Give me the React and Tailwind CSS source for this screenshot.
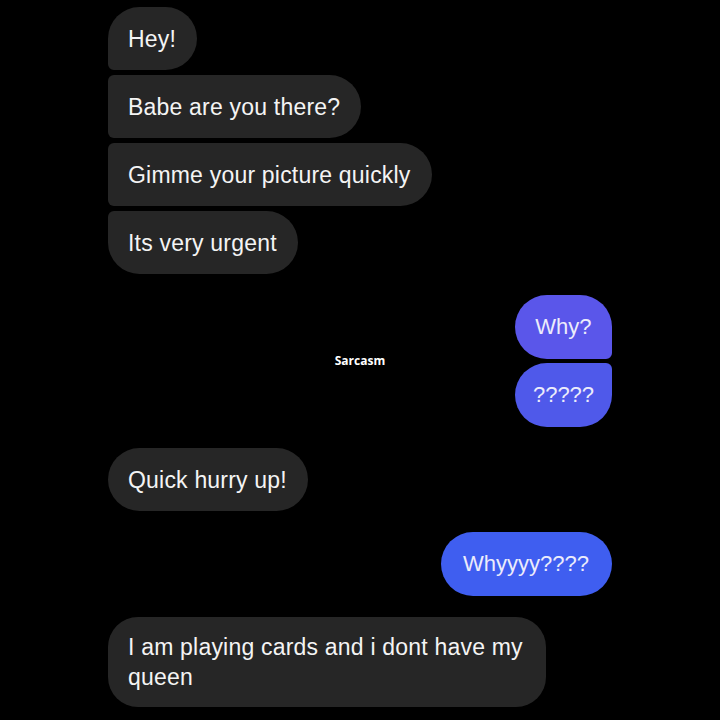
const gray = 'bg-[#262626] text-[#f4f4f4] text-[23px] leading-[30px] tracking-[0.2px] pl-5 pr-[21px]';
const blueText = 'text-[#ececfb] text-[22px] leading-[30px]';

const Left = ({ children, corners }) => (
  <div className={`${gray} ${corners} py-[16.5px] max-w-[438px]`}>{children}</div>
);

const App = () => {
  return (
    <div
      className="w-[720px] h-[720px] bg-black overflow-hidden flex flex-col gap-[21px] px-[108px] pt-[7px]"
      style={{ fontFamily: '"Liberation Sans", Arial, sans-serif' }}
    >
      {/* Incoming burst */}
      <div className="flex flex-col items-start gap-[5px]">
        <Left corners="rounded-[32px] rounded-bl-[6px]">Hey!</Left>
        <Left corners="rounded-r-[32px] rounded-l-[6px]">Babe are you there?</Left>
        <Left corners="rounded-r-[32px] rounded-l-[6px]">Gimme your picture quickly</Left>
        <Left corners="rounded-[32px] rounded-tl-[6px]">Its very urgent</Left>
      </div>

      {/* Outgoing pair + watermark */}
      <div className="grid grid-cols-[1fr_auto_1fr] items-center">
        <div />
        <div
          className="text-white text-[12px] font-bold"
          style={{ fontFamily: '"Open Sans", sans-serif' }}
        >
          Sarcasm
        </div>
        <div className="flex flex-col items-end gap-[4px]">
          <div className={`${blueText} bg-[#5a56ea] px-[20.5px] py-[17px] rounded-[32px] rounded-br-[6px]`}>
            Why?
          </div>
          <div className={`${blueText} bg-[#4f59ea] w-[97px] text-center py-[17px] rounded-[32px] rounded-tr-[6px]`}>
            ?????
          </div>
        </div>
      </div>

      <div className="flex">
        <Left corners="rounded-[32px]">Quick hurry up!</Left>
      </div>

      <div className="flex justify-end">
        <div className={`${blueText} bg-[#3f5ef0] pl-[22px] pr-[23px] py-[17px] rounded-[32px]`}>
          Whyyyy????
        </div>
      </div>

      <div className="flex">
        <div className={`${gray} rounded-[30px] py-[15px] w-[438px]`}>
          I am playing cards and i dont have my queen
        </div>
      </div>
    </div>
  );
};

export default App;
